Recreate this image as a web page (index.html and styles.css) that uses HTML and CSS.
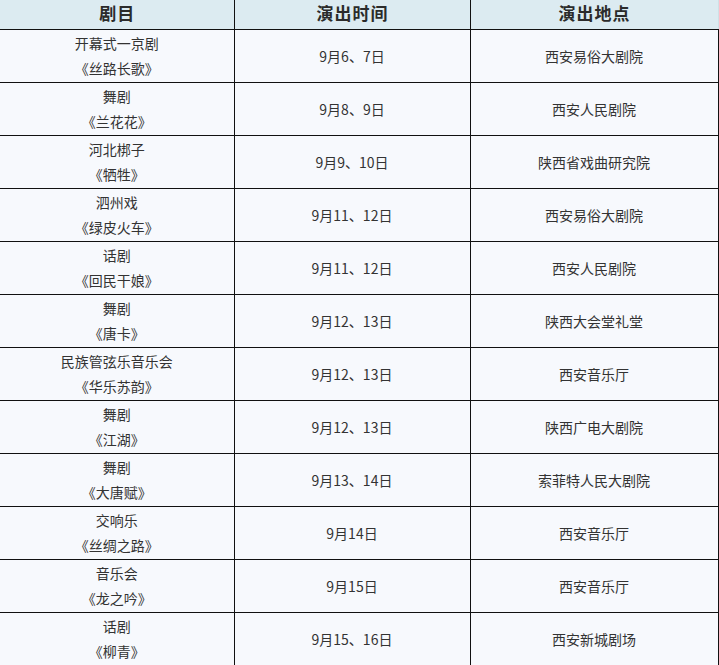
FILE: index.html
```html
<!DOCTYPE html>
<html lang="zh">
<head>
<meta charset="utf-8">
<link rel="stylesheet" href="styles.css">
</head>
<body>
<table class="sched">
  <colgroup><col class="c1"><col class="c2"><col class="c3"></colgroup>
  <thead>
    <tr><th>剧目</th><th>演出时间</th><th>演出地点</th></tr>
  </thead>
  <tbody>
    <tr><td>开幕式一京剧<br>《丝路长歌》</td><td>9月6、7日</td><td>西安易俗大剧院</td></tr>
    <tr><td>舞剧<br>《兰花花》</td><td>9月8、9日</td><td>西安人民剧院</td></tr>
    <tr><td>河北梆子<br>《牺牲》</td><td>9月9、10日</td><td>陕西省戏曲研究院</td></tr>
    <tr><td>泗州戏<br>《绿皮火车》</td><td>9月11、12日</td><td>西安易俗大剧院</td></tr>
    <tr><td>话剧<br>《回民干娘》</td><td>9月11、12日</td><td>西安人民剧院</td></tr>
    <tr><td>舞剧<br>《唐卡》</td><td>9月12、13日</td><td>陕西大会堂礼堂</td></tr>
    <tr><td>民族管弦乐音乐会<br>《华乐苏韵》</td><td>9月12、13日</td><td>西安音乐厅</td></tr>
    <tr><td>舞剧<br>《江湖》</td><td>9月12、13日</td><td>陕西广电大剧院</td></tr>
    <tr><td>舞剧<br>《大唐赋》</td><td>9月13、14日</td><td>索菲特人民大剧院</td></tr>
    <tr><td>交响乐<br>《丝绸之路》</td><td>9月14日</td><td>西安音乐厅</td></tr>
    <tr><td>音乐会<br>《龙之吟》</td><td>9月15日</td><td>西安音乐厅</td></tr>
    <tr><td>话剧<br>《柳青》</td><td>9月15、16日</td><td>西安新城剧场</td></tr>
  </tbody>
</table>
</body>
</html>
```
FILE: styles.css
```css
html, body {
  margin: 0;
  padding: 0;
  background: #f7f9fc;
}
body {
  font-family: "Noto Sans CJK SC", "Noto Sans", sans-serif;
  color: #333;
  overflow: hidden;
}
.sched {
  border-collapse: collapse;
  table-layout: fixed;
  width: 718px;
}
.c1 { width: 234px; }
.c2 { width: 236px; }
.c3 { width: 248px; }
.sched th {
  height: 29px;
  padding: 0 0 0 1px;
  background: #dcebf1;
  font-size: 17px;
  font-weight: 700;
  letter-spacing: 1px;
  color: #2b2b2b;
  line-height: 26px;
  vertical-align: top;
  text-align: center;
  border-bottom: 1px solid #111;
  border-right: 1px solid #111;
}
.sched th:last-child {
  border-right: 1px solid #cfe0e6;
}
.sched td {
  height: 52px;
  padding: 0;
  text-align: center;
  vertical-align: middle;
  font-size: 14px;
  line-height: 25px;
  color: #333;
  background: #f7f9fd;
  border-bottom: 1px solid #111;
  border-right: 1px solid #111;
}
```
